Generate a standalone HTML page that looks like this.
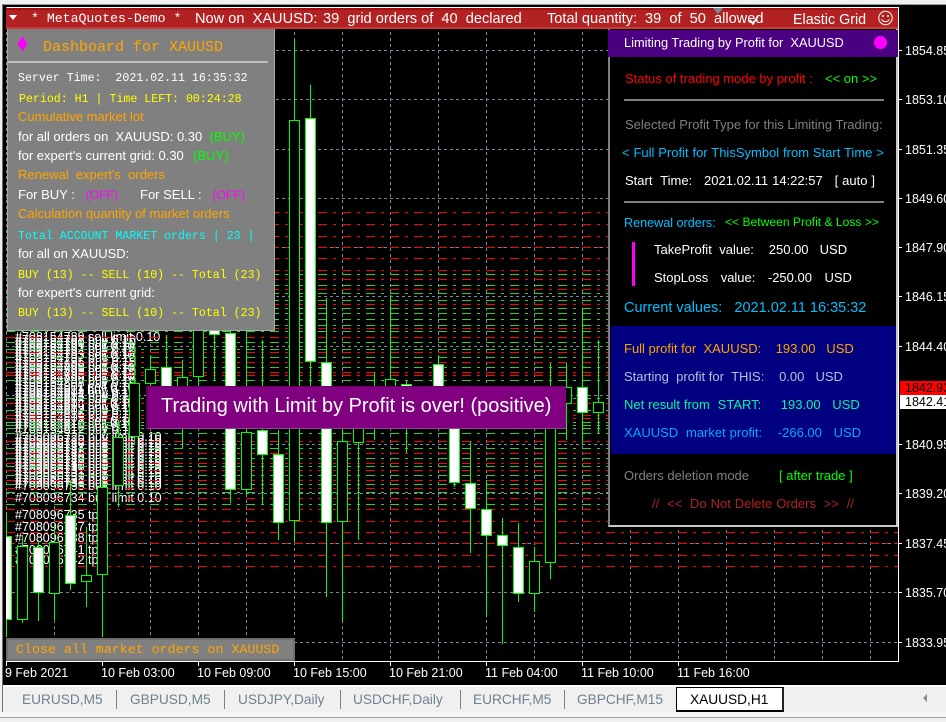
<!DOCTYPE html>
<html><head><meta charset="utf-8">
<style>
html,body{margin:0;padding:0;background:#000;}
#r{position:relative;width:946px;height:722px;overflow:hidden;background:#000;font-family:"Liberation Sans",Arial,sans-serif;font-size:13px;color:#fff;}
.a{position:absolute;}
.t{position:absolute;white-space:pre;line-height:14px;}
.m{font-family:"Liberation Mono","Courier New",monospace;font-size:11.6px;}
.o{color:#ffa500}.y{color:#ffff00}.l{color:#00ff00}.g{color:#808080}.b{color:#00bfff}
.tab{position:absolute;top:692px;white-space:pre;font-size:13.7px;line-height:15px;color:#708090;}
.sep{position:absolute;top:690px;width:1px;height:19px;background:#808080;}
.ax{position:absolute;left:905px;font-size:12.5px;line-height:14px;white-space:pre;color:#fff;}
.tm{position:absolute;top:666px;font-size:12.5px;line-height:14px;white-space:pre;color:#fff;}
svg{position:absolute;left:0;top:0;}
svg text{font-family:"Liberation Sans",Arial,sans-serif;font-size:12.5px;fill:#fff;white-space:pre;}
</style></head><body><div id="r">

<svg width="946" height="722" viewBox="0 0 946 722">
<defs><clipPath id="c"><rect x="6" y="8" width="892" height="653"/></clipPath></defs>
<g clip-path="url(#c)">
<g shape-rendering="crispEdges" fill="none" stroke="#778899" stroke-dasharray="3 3">
<path d="M6.5 8V661M54.5 8V661M102.5 8V661M150.5 8V661M198.5 8V661M246.5 8V661M294.5 8V661M342.5 8V661M390.5 8V661M438.5 8V661M486.5 8V661M534.5 8V661M582.5 8V661M630.5 8V661M678.5 8V661M726.5 8V661M774.5 8V661M822.5 8V661M870.5 8V661"/>
<path d="M6 50.5H898M6 99.5H898M6 149.5H898M6 198.5H898M6 247.5H898M6 296.5H898M6 346.5H898M6 395.5H898M6 444.5H898M6 493.5H898M6 543.5H898M6 592.5H898M6 642.5H898"/>
</g>
<text x="15" y="341">#708154789 sell limit 0.10</text>
<text x="15" y="344">#708154788 buy 0.10</text>
<text x="15" y="347">#708154790 buy 0.10</text>
<text x="15" y="350">#708154791 sell 0.10</text>
<text x="15" y="353">#708154792 buy 0.10</text>
<text x="15" y="356">#708154794 buy 0.10</text>
<text x="15" y="359">#708154793 sell 0.10</text>
<text x="15" y="362">#708154797 buy 0.10</text>
<text x="15" y="366">#708154795 buy 0.10</text>
<text x="15" y="369">#708154800 buy 0.10</text>
<text x="15" y="372">#708154796 sell 0.10</text>
<text x="15" y="375">#708154803 buy 0.10</text>
<text x="15" y="378">#708154798 buy 0.10</text>
<text x="15" y="381">#708154805 sell 0.10</text>
<text x="15" y="384">#708154799 buy 0.10</text>
<text x="15" y="387">#708154808 buy 0.10</text>
<text x="15" y="391">#708154801 sell 0.10</text>
<text x="15" y="394">#708154811 buy 0.10</text>
<text x="15" y="397">#708154802 buy 0.10</text>
<text x="15" y="400">#708154813 buy 0.10</text>
<text x="15" y="403">#708154804 buy 0.10</text>
<text x="15" y="406">#708154814 sell 0.10</text>
<text x="15" y="409">#708154806 sell 0.10</text>
<text x="15" y="412">#708154815 buy 0.10</text>
<text x="15" y="415">#708154807 buy 0.10</text>
<text x="15" y="418">#708154816 buy 0.10</text>
<text x="15" y="422">#708154809 buy 0.10</text>
<text x="15" y="425">#708154817 sell 0.10</text>
<text x="15" y="428">#708154810 sell 0.10</text>
<text x="15" y="431">#708154818 buy 0.10</text>
<text x="15" y="434">#708154812 buy 0.10</text>
<text x="15" y="441">#708096725 buy limit 0.10</text>
<text x="15" y="444">#708096725 buy limit 0.10</text>
<text x="15" y="447">#708096726 buy limit 0.10</text>
<text x="15" y="450">#708096727 buy limit 0.10</text>
<text x="15" y="453">#708096727 buy limit 0.10</text>
<text x="15" y="456">#708096728 buy limit 0.10</text>
<text x="15" y="459">#708096728 buy limit 0.10</text>
<text x="15" y="462">#708096729 buy limit 0.10</text>
<text x="15" y="465">#708096729 buy limit 0.10</text>
<text x="15" y="468">#708096730 buy limit 0.10</text>
<text x="15" y="471">#708096730 buy limit 0.10</text>
<text x="15" y="474">#708096731 buy limit 0.10</text>
<text x="15" y="477">#708096731 buy limit 0.10</text>
<text x="15" y="481">#708096732 buy limit 0.10</text>
<text x="15" y="484">#708096732 buy limit 0.10</text>
<text x="15" y="487">#708096733 buy limit 0.10</text>
<text x="15" y="490">#708096733 buy limit 0.10</text>
<text x="15" y="502">#708096734 buy limit 0.10</text>
<text x="15" y="519">#708096735 tp</text>
<text x="15" y="531">#708096737 tp</text>
<text x="15" y="542">#708096738 tp</text>
<text x="15" y="554">#708096741 tp</text>
<text x="15" y="564">#708096742 tp</text>
<g shape-rendering="crispEdges" fill="none" stroke-dasharray="9 6 3 6">
<path stroke="#ff0000" d="M6 212.5H898M6 224.5H898M6 236.5H898M6 247.5H898M6 258.5H898M6 270.5H898M6 279.5H898M6 289.5H898M6 304.5H898M6 328.5H898M6 337.5H898M6 352.5H898M6 362.5H898M6 372.5H898M6 375.5H898M6 403.5H898M6 415.5H898M6 418.5H898M6 441.5H898M6 453.5H898M6 463.5H898M6 470.5H898M6 480.5H898M6 488.5H898M6 498.5H898M6 509.5H898M6 521.5H898M6 532.5H898M6 543.5H898M6 555.5H898M6 566.5H898"/>
<path stroke="#32cd32" d="M6 274.5H898M6 285.5H898M6 293.5H898M6 300.5H898M6 308.5H898M6 313.5H898M6 319.5H898M6 325.5H898M6 331.5H898M6 342.5H898M6 349.5H898M6 357.5H898M6 367.5H898M6 380.5H898M6 398.5H898M6 410.5H898M6 422.5H898M6 425.5H898M6 428.5H898M6 433.5H898M6 448.5H898M6 458.5H898M6 466.5H898M6 475.5H898M6 484.5H898M6 492.5H898M6 504.5H898"/>
</g>
<path shape-rendering="crispEdges" fill="none" stroke="#00ff00" d="M6.5 513V637M22.5 535V623M38.5 540V621M54.5 525V620M70.5 480V590M86.5 527V607M102.5 480V637M118.5 420V507M134.5 345V445M150.5 355V388M166.5 335V400M182.5 360V448M198.5 300V386M214.5 300V380M230.5 300V503M246.5 331V495M262.5 340V505M278.5 430V540M294.5 40V542M310.5 85V386M326.5 298V597M342.5 429V622M358.5 420V540M374.5 372V440M390.5 295V400M406.5 380V453M438.5 355V400M454.5 400V487M470.5 441V553M486.5 480V617M502.5 518V644M518.5 523V602M534.5 547V612M550.5 363V579M566.5 363V440M582.5 308V445M598.5 340V433"/>
<g shape-rendering="crispEdges" stroke="#00ff00" stroke-width="1">
<g fill="#fff">
<rect x="1.5" y="536.5" width="10" height="83"/>
<rect x="33.5" y="547.5" width="10" height="45"/>
<rect x="65.5" y="515.5" width="10" height="68"/>
<rect x="161.5" y="367.5" width="10" height="35"/>
<rect x="209.5" y="290.5" width="10" height="44"/>
<rect x="225.5" y="333.5" width="10" height="156"/>
<rect x="257.5" y="430.5" width="10" height="24"/>
<rect x="273.5" y="454.5" width="10" height="68"/>
<rect x="305.5" y="118.5" width="10" height="243"/>
<rect x="321.5" y="362.5" width="10" height="160"/>
<rect x="401.5" y="384.5" width="10" height="16"/>
<rect x="433.5" y="364.5" width="10" height="36"/>
<rect x="449.5" y="400.5" width="10" height="82"/>
<rect x="465.5" y="483.5" width="10" height="25"/>
<rect x="481.5" y="509.5" width="10" height="26"/>
<rect x="497.5" y="535.5" width="10" height="10"/>
<rect x="513.5" y="547.5" width="10" height="46"/>
<rect x="577.5" y="387.5" width="10" height="25"/>
</g>
<g fill="#000">
<rect x="17.5" y="546.5" width="10" height="73"/>
<rect x="49.5" y="542.5" width="10" height="51"/>
<rect x="81.5" y="575.5" width="10" height="6"/>
<rect x="97.5" y="487.5" width="10" height="87"/>
<rect x="113.5" y="437.5" width="10" height="48"/>
<rect x="129.5" y="383.5" width="10" height="53"/>
<rect x="145.5" y="369.5" width="10" height="14"/>
<rect x="177.5" y="377.5" width="10" height="33"/>
<rect x="193.5" y="315.5" width="10" height="61"/>
<rect x="241.5" y="432.5" width="10" height="57"/>
<rect x="289.5" y="120.5" width="10" height="400"/>
<rect x="337.5" y="441.5" width="10" height="80"/>
<rect x="353.5" y="400.5" width="10" height="42"/>
<rect x="385.5" y="379.5" width="10" height="30"/>
<rect x="529.5" y="561.5" width="10" height="32"/>
<rect x="545.5" y="410.5" width="10" height="152"/>
<rect x="561.5" y="387.5" width="10" height="16"/>
<rect x="593.5" y="402.5" width="10" height="10"/>
</g>
</g>
</g>
<!-- frame -->
<path shape-rendering="crispEdges" fill="none" stroke="#fff" d="M6.5 7.5H898.5V661.5H6.5M898.5 50.5H902M898.5 99.5H902M898.5 149.5H902M898.5 198.5H902M898.5 247.5H902M898.5 296.5H902M898.5 346.5H902M898.5 444.5H902M898.5 493.5H902M898.5 543.5H902M898.5 592.5H902M898.5 642.5H902M6.5 661V666M102.5 661V666M198.5 661V666M294.5 661V666M390.5 661V666M486.5 661V666M582.5 661V666M678.5 661V666"/>
</svg>

<!-- window edges -->
<div class="a" style="left:0;top:0;width:946px;height:4px;background:#f0f0f0"></div>
<div class="a" style="left:0;top:4px;width:946px;height:1px;background:#9a9a9a"></div>
<div class="a" style="left:0;top:0;width:2px;height:722px;background:#f0f0f0"></div>
<div class="a" style="left:2px;top:4px;width:1px;height:708px;background:#707070"></div>

<!-- axis -->
<div class="ax" style="top:44px">1854.85</div>
<div class="ax" style="top:93px">1853.10</div>
<div class="ax" style="top:143px">1851.35</div>
<div class="ax" style="top:192px">1849.60</div>
<div class="ax" style="top:241px">1847.90</div>
<div class="ax" style="top:290px">1846.15</div>
<div class="ax" style="top:340px">1844.40</div>
<div class="ax" style="top:438px">1840.95</div>
<div class="ax" style="top:487px">1839.20</div>
<div class="ax" style="top:537px">1837.45</div>
<div class="ax" style="top:586px">1835.70</div>
<div class="ax" style="top:636px">1833.95</div>
<div class="a" style="left:900px;top:381px;width:46px;height:14px;background:#ff0000"></div>
<div class="a" style="left:900px;top:395px;width:46px;height:14px;background:#fff"></div>
<div class="ax" style="top:381px;color:#000">1842.93</div>
<div class="ax" style="top:395px;color:#000">1842.41</div>

<div class="tm" style="left:5px">9 Feb 2021</div>
<div class="tm" style="left:101px">10 Feb 03:00</div>
<div class="tm" style="left:197px">10 Feb 09:00</div>
<div class="tm" style="left:293px">10 Feb 15:00</div>
<div class="tm" style="left:389px">10 Feb 21:00</div>
<div class="tm" style="left:485px">11 Feb 04:00</div>
<div class="tm" style="left:581px">11 Feb 10:00</div>
<div class="tm" style="left:677px">11 Feb 16:00</div>

<!-- title bar -->
<div class="a" style="left:6px;top:8px;width:892px;height:21px;background:#b22222"></div>
<div class="a" style="left:6px;top:8px;width:892px;height:2px;background:#a01010"></div>
<div class="a" style="left:6px;top:27px;width:892px;height:2px;background:#cb3a3a"></div>
<div class="a" style="left:9px;top:15px;width:0;height:0;border-left:4.5px solid transparent;border-right:4.5px solid transparent;border-top:5px solid #fff"></div>
<div class="t" style="left:31px;top:12px;font-family:'Liberation Mono',monospace;font-size:13.2px">* MetaQuotes-Demo *</div>
<div class="t" style="left:195px;top:12px;font-size:14.6px">Now on  XAUUSD:</div>
<div class="t" style="left:323px;top:12px;font-size:14.6px">39  grid orders of  40  declared</div>
<div class="t" style="left:547px;top:12px;font-size:14.6px">Total quantity:</div>
<div class="t" style="left:645px;top:12px;font-size:14.6px">39  of  50  allowed</div>
<div class="t" style="left:793px;top:13px;font-size:14.3px">Elastic Grid</div>
<div class="a" style="left:713px;top:8px;width:0;height:0;border-left:5.5px solid transparent;border-right:5.5px solid transparent;border-top:6px solid #778899"></div>
<svg width="946" height="40" viewBox="0 0 946 40" style="height:40px">
<path d="M750 20l3 4 5-8" fill="none" stroke="#fff" stroke-width="1.6"/>
<circle cx="885.5" cy="18" r="6.7" fill="none" stroke="#fff" stroke-width="1"/>
<circle cx="883" cy="16" r="1" fill="#fff"/><circle cx="888" cy="16" r="1" fill="#fff"/>
<path d="M881.5 19.5q4 4.5 8 0" fill="none" stroke="#fff" stroke-width="1"/>
</svg>

<!-- left panel -->
<div class="a" style="left:7px;top:29px;width:268px;height:302px;background:#808080;box-sizing:border-box;border-left:1px solid #a9a9a9;border-right:1px solid #a9a9a9;border-bottom:1px solid #a9a9a9"></div>
<div class="a" style="left:8px;top:61px;width:260px;height:2px;background:#c0c0c0"></div>
<svg width="40" height="60" viewBox="0 0 40 60" style="width:40px;height:60px"><path d="M22.500 36l4.800 7.500-4.800 8-5-8z" fill="#ff00ff"/></svg>
<div class="t m o" style="left:43px;top:41px;font-size:15px">Dashboard for XAUUSD</div>
<div class="t m" style="left:18px;top:72px">Server Time:  2021.02.11 16:35:32</div>
<div class="t m y" style="left:19px;top:93px">Period: H1 | Time LEFT: 00:24:28</div>
<div class="t o" style="left:18px;top:110px">Cumulative market lot</div>
<div class="t" style="left:18px;top:130px">for all orders on  XAUUSD: 0.30  <span class="l">(BUY)</span></div>
<div class="t" style="left:18px;top:149px">for expert's current grid: 0.30  <span class="l" style="margin-left:2px">(BUY)</span></div>
<div class="t o" style="left:18px;top:168px">Renewal  expert's  orders</div>
<div class="t" style="left:18px;top:188px">For BUY :   <span style="color:#ff00ff;font-size:12.2px">(OFF)</span></div>
<div class="t" style="left:140px;top:188px">For SELL :   <span style="color:#ff00ff;font-size:12.2px">(OFF)</span></div>
<div class="t o" style="left:18px;top:207px">Calculation quantity of market orders</div>
<div class="t m" style="left:18px;top:230px;color:#00ffff">Total ACCOUNT MARKET orders | 23 |</div>
<div class="t" style="left:18px;top:247px">for all on XAUUSD:</div>
<div class="t m y" style="left:18px;top:269px">BUY (13) -- SELL (10) -- Total (23)</div>
<div class="t" style="left:18px;top:286px">for expert's current grid:</div>
<div class="t m y" style="left:18px;top:307px">BUY (13) -- SELL (10) -- Total (23)</div>

<!-- close button -->
<div class="a" style="left:6px;top:638px;width:289px;height:23px;background:#808080;box-sizing:border-box;border:2px solid #6e6e6e"></div>
<div class="t m o" style="left:16px;top:643px;font-size:13.3px">Close all market orders on XAUUSD</div>

<!-- right panel -->
<div class="a" style="left:608px;top:29px;width:290px;height:498px;background:#000;box-sizing:border-box;border-left:2px solid #808080;border-right:2px solid #c8c8c8;border-bottom:2px solid #c8c8c8"></div>
<div class="a" style="left:608px;top:30px;width:290px;height:27px;background:#4b0082"></div>
<div class="t" style="left:624px;top:36px;font-size:12.8px">Limiting Trading by Profit for  XAUUSD</div>
<div class="a" style="left:873.500px;top:36px;width:13px;height:13px;border-radius:50%;background:#ff00ff"></div>
<div class="t" style="left:625px;top:72px;color:#ff0000">Status of trading mode by profit :</div>
<div class="t l" style="left:825px;top:72px">&lt;&lt; on &gt;&gt;</div>
<div class="a" style="left:624px;top:99px;width:260px;height:2px;background:#808080"></div>
<div class="t g" style="left:625px;top:118px">Selected Profit Type for this Limiting Trading:</div>
<div class="t b" style="left:622px;top:146px;word-spacing:.25px">&lt; Full Profit for ThisSymbol from Start Time &gt;</div>
<div class="t" style="left:625px;top:174px;word-spacing:.35px">Start  Time:   2021.02.11 14:22:57   [ auto ]</div>
<div class="a" style="left:624px;top:201px;width:260px;height:2px;background:#808080"></div>
<div class="t b" style="left:624px;top:216px;font-size:12.6px">Renewal orders:</div>
<div class="t l" style="left:725px;top:215px;font-size:12.1px">&lt;&lt; Between Profit &amp; Loss &gt;&gt;</div>
<div class="a" style="left:632px;top:242px;width:3px;height:44px;background:#ff00ff"></div>
<div class="t" style="left:654px;top:243px;word-spacing:.1px">TakeProfit  value:    250.00   USD</div>
<div class="t" style="left:654px;top:271px;word-spacing:.55px">StopLoss   value:   -250.00   USD</div>
<div class="t b" style="left:624px;top:300.500px;font-size:14.5px">Current values:   2021.02.11 16:35:32</div>
<div class="a" style="left:611px;top:326px;width:285px;height:128px;background:#000080"></div>
<div class="t o" style="left:624px;top:342px">Full profit for  XAUUSD:    193.00   USD</div>
<div class="t" style="left:624px;top:370px;color:#b0c4de;word-spacing:.08px">Starting  profit for  THIS:    0.00   USD</div>
<div class="t" style="left:624px;top:398px;color:#00fa9a;word-spacing:.3px">Net result from  START:     193.00   USD</div>
<div class="t" style="left:624px;top:426px;color:#00aaff;word-spacing:.3px">XAUUSD  market profit:    -266.00   USD</div>
<div class="t g" style="left:624px;top:469px">Orders deletion mode</div>
<div class="t l" style="left:779px;top:469px">[ after trade ]</div>
<div class="t" style="left:652px;top:497px;color:#b22222;word-spacing:.3px">//  &lt;&lt;  Do Not Delete Orders  &gt;&gt;  //</div>

<!-- banner -->
<div class="a" style="left:146px;top:386px;width:420px;height:43px;background:#800080;box-sizing:border-box;border-left:2px solid #5e005e;border-top:1px solid #6e006e;border-bottom:1px solid #9a3a9a"></div>
<div class="t" style="left:161px;top:395px;font-size:19.95px;line-height:23px">Trading with Limit by Profit is over! (positive)</div>

<!-- tabs -->
<div class="a" style="left:3px;top:685px;width:943px;height:2px;background:#fff"></div>
<div class="a" style="left:3px;top:687px;width:943px;height:25px;background:#f0f0f0"></div>
<div class="a" style="left:0;top:712px;width:946px;height:5px;background:#f6f6f6"></div>
<div class="a" style="left:0;top:717px;width:946px;height:1px;background:#a6a6a6"></div>
<div class="a" style="left:0;top:718px;width:946px;height:4px;background:#f0f0f0"></div>
<div class="tab" style="left:22px">EURUSD,M5</div><div class="sep" style="left:116px"></div>
<div class="tab" style="left:130px">GBPUSD,M5</div><div class="sep" style="left:224px"></div>
<div class="tab" style="left:238px">USDJPY,Daily</div><div class="sep" style="left:340px"></div>
<div class="tab" style="left:353px">USDCHF,Daily</div><div class="sep" style="left:460px"></div>
<div class="tab" style="left:473px">EURCHF,M5</div><div class="sep" style="left:564px"></div>
<div class="tab" style="left:577px">GBPCHF,M15</div>
<div class="a" style="left:676px;top:687px;width:108px;height:25px;background:#fff;box-sizing:border-box;border:1px solid #000;border-bottom:2px solid #000;border-right:2px solid #222"></div>
<div class="tab" style="left:690px;color:#000">XAUUSD,H1</div>
<div class="a" style="left:923px;top:694px;width:0;height:0;border-top:4px solid transparent;border-bottom:4px solid transparent;border-right:4px solid #8a8a8a"></div>

</div></body></html>
